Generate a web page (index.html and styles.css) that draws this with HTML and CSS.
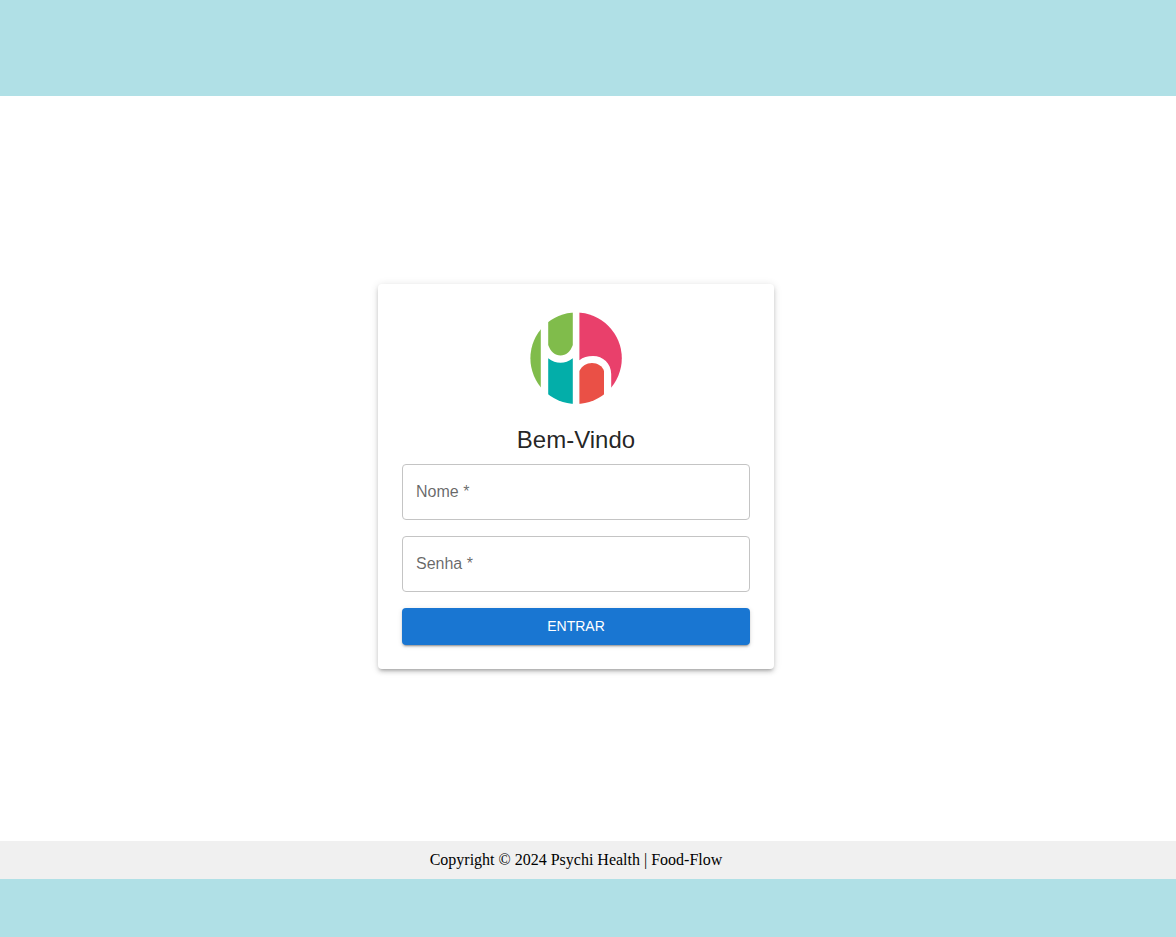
FILE: index.html
```html
<!DOCTYPE html>
<html lang="pt-BR">
<head>
  <meta charset="utf-8">
  <meta name="viewport" content="width=device-width, initial-scale=1">
  <title>Food-Flow</title>
  <link rel="stylesheet" href="styles.css">
</head>
<body class="page">
  <header class="topbar"></header>
  <main class="content">
    <form class="card">
      <svg class="logo" viewBox="0 0 100 100" role="img" aria-label="Psychi Health">
        <defs>
          <clipPath id="disc"><circle cx="50.1" cy="50.2" r="45.7"/></clipPath>
        </defs>
        <g clip-path="url(#disc)">
          <path fill="#80bc4b" d="M0 0H14.800V100H0Z"/>
          <path fill="#80bc4b" d="M22.200 0H46.800V37C44.500 43.500 40 47.500 34.500 47.500S24.500 43.500 22.200 37Z"/>
          <path fill="#03aea9" d="M22.200 50.200C30 56.200 39 56.200 46.800 50.200V100H22.200Z"/>
          <path fill="#e9406b" d="M53.400 0H100V100H85.200V66C85.200 55.500 77 48 67 48C61.500 48 57 49.200 53.400 52.200Z"/>
          <path fill="#ea5046" d="M53.400 63C56 57.800 60.500 55 66 55S76.500 58 78 63V100H53.400Z"/>
        </g>
      </svg>
      <h1 class="title">Bem-Vindo</h1>
      <div class="fields">
        <div class="field">
          <input class="input" id="nome" type="text" placeholder=" " autocomplete="username" required>
          <label class="label" for="nome">Nome *</label>
        </div>
        <div class="field">
          <input class="input" id="senha" type="password" placeholder=" " autocomplete="current-password" required>
          <label class="label" for="senha">Senha *</label>
        </div>
        <button class="submit" type="submit">ENTRAR</button>
      </div>
    </form>
  </main>
  <footer class="footer">Copyright © 2024 Psychi Health | Food-Flow</footer>
</body>
</html>
```

FILE: styles.css
```css
* {
  box-sizing: border-box;
}

.page {
  display: flex;
  flex-direction: column;
  min-height: 100vh;
  margin: 0;
  padding-bottom: 58px;
  background: #b0e0e6;
  font-family: "Liberation Sans", Arial, sans-serif;
}

.topbar {
  height: 96px;
}

.content {
  flex: 1;
  display: flex;
  align-items: center;
  justify-content: center;
  padding: 16px 24px 0 0;
  background: #fff;
}

.card {
  display: flex;
  flex-direction: column;
  align-items: center;
  width: 100%;
  max-width: 396px;
  padding: 24px;
  border-radius: 4px;
  background: #fff;
  box-shadow: 0 3px 3px -2px rgba(0, 0, 0, 0.2),
    0 3px 4px 0 rgba(0, 0, 0, 0.14),
    0 1px 8px 0 rgba(0, 0, 0, 0.12);
}

.logo {
  width: 100px;
  height: 100px;
  margin-bottom: 16px;
}

.title {
  margin: 0 0 8px;
  color: rgba(0, 0, 0, 0.87);
  font-size: 24px;
  font-weight: 400;
  line-height: 32px;
}

.fields {
  display: flex;
  flex-direction: column;
  gap: 16px;
  width: 100%;
}

.field {
  position: relative;
}

.input {
  display: block;
  width: 100%;
  height: 56px;
  padding: 0 14px;
  border: 1px solid #c4c4c4;
  border-radius: 4px;
  background: #fff;
  color: rgba(0, 0, 0, 0.87);
  font: inherit;
  font-size: 16px;
}

.input:focus {
  border-color: #1976d2;
  outline: none;
}

.label {
  position: absolute;
  top: 16px;
  left: 14px;
  color: rgba(0, 0, 0, 0.6);
  font-size: 16px;
  line-height: 24px;
  pointer-events: none;
}

.input:focus + .label,
.input:not(:placeholder-shown) + .label {
  top: -8px;
  padding: 0 4px;
  background: #fff;
  font-size: 12px;
  line-height: 16px;
}

.submit {
  width: 100%;
  padding: 6px 16px 7px;
  border: 0;
  border-radius: 4px;
  background: #1976d2;
  color: #fff;
  font: inherit;
  font-size: 14px;
  font-weight: 500;
  line-height: 24px;
  cursor: pointer;
  box-shadow: 0 3px 1px -2px rgba(0, 0, 0, 0.2),
    0 2px 2px 0 rgba(0, 0, 0, 0.14),
    0 1px 5px 0 rgba(0, 0, 0, 0.12);
}

.footer {
  padding: 10px 24px 10px 0;
  background: #f0f0f0;
  color: #000;
  font-family: "Liberation Serif", "Times New Roman", serif;
  font-size: 16px;
  line-height: 18px;
  text-align: center;
}
```
